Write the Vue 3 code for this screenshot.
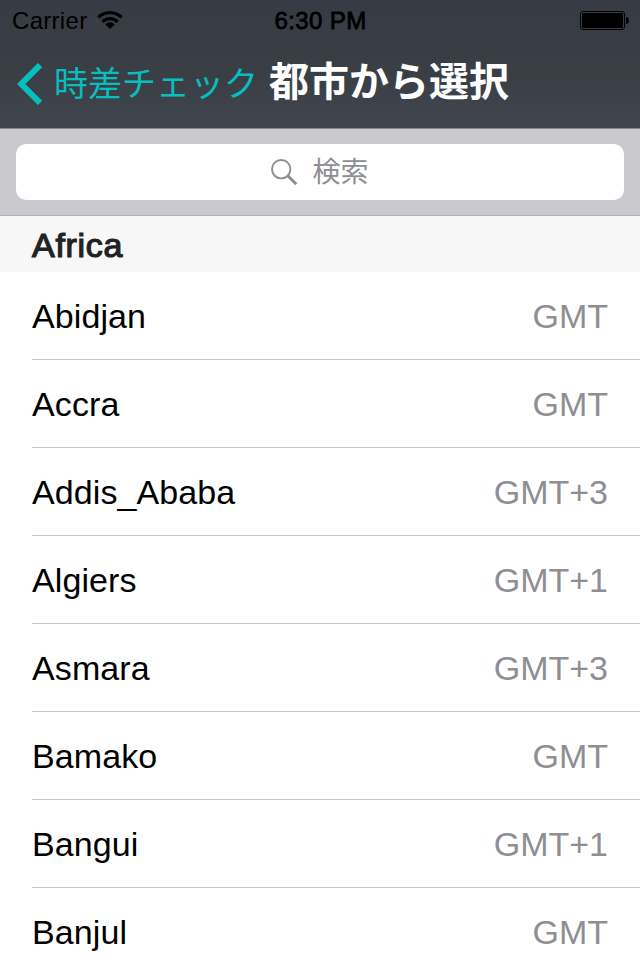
<script setup>
// 都市一覧（名前と GMT からの時差）
const cities = [
  { name: 'Abidjan', offset: 'GMT' },
  { name: 'Accra', offset: 'GMT' },
  { name: 'Addis_Ababa', offset: 'GMT+3' },
  { name: 'Algiers', offset: 'GMT+1' },
  { name: 'Asmara', offset: 'GMT+3' },
  { name: 'Bamako', offset: 'GMT' },
  { name: 'Bangui', offset: 'GMT+1' },
  { name: 'Banjul', offset: 'GMT' }
]
</script>

<template>
  <div class="screen">
    <header class="top">
      <!-- ステータスバー -->
      <div class="status">
        <div class="carrier">
          <span>Carrier</span>
          <svg class="wifi" width="26" height="18" viewBox="0 0 26 18">
            <g fill="none" stroke="#000" stroke-width="3.2">
              <path d="M1.4 6.4A16.4 16.4 0 0 1 24.6 6.400" />
              <path d="M5.4 10.9A10.6 10.6 0 0 1 20.6 10.9" />
            </g>
            <path d="M13 18L8.300 13.4A6.4 6.4 0 0 1 17.700 13.4Z" />
          </svg>
        </div>
        <span class="time">6:30 PM</span>
        <svg class="battery" width="49" height="20" viewBox="0 0 49 20">
          <rect x="0.5" y="0.5" width="44" height="18" rx="2.5" fill="none" stroke="#000" />
          <rect x="2" y="2" width="41" height="15" rx="1" />
          <path d="M46 6C48 6 49 7.500 49 9.500S48 13 46 13Z" />
        </svg>
      </div>
      <!-- ナビゲーションバー -->
      <nav class="nav">
        <div class="back">
          <svg class="chevron" width="26" height="42" viewBox="0 0 26 42">
            <path d="M23.100 2.100L4.200 21L23.100 39.900" fill="none" stroke="#06bfbf" stroke-width="6" />
          </svg>
          <span class="back-label">時差チェック</span>
        </div>
        <h1 class="title">都市から選択</h1>
      </nav>
    </header>

    <div class="search">
      <div class="search-box">
        <svg class="glass" width="27" height="27" viewBox="0 0 27 27">
          <g fill="none" stroke="#8e8e93">
            <circle cx="10.200" cy="10.200" r="9.200" stroke-width="1.900" />
            <path d="M16.800 16.800L25.300 25.300" stroke-width="3" />
          </g>
        </svg>
        <span class="placeholder">検索</span>
      </div>
    </div>

    <h2 class="section">Africa</h2>
    <ul class="list">
      <li v-for="city in cities" :key="city.name" class="row">
        <span class="name">{{ city.name }}</span>
        <span class="offset">{{ city.offset }}</span>
      </li>
    </ul>
  </div>
</template>

<style>
body { margin: 0; background: #fff; }
</style>

<style scoped>
.screen {
  width: 640px; height: 960px; overflow: hidden; background: #fff; color: #000;
  font-family: "Liberation Sans", "Noto Sans CJK JP", sans-serif;
}
/* 上部バー */
.top { height: 128px; background: linear-gradient(#373b43, #3a3f46 60%, #41454e); }
.status {
  display: grid; grid-template-columns: 1fr auto 1fr; height: 40px;
  padding: 0 11px 0 12px; box-sizing: border-box; font-size: 24px; line-height: 42px;
}
.carrier { display: flex; letter-spacing: 0.3px; }
.wifi { margin: 11px 0 0 10px; }
/* 中間の太さは細い縁取りで出す */
.time { letter-spacing: 0.4px; -webkit-text-stroke: 0.8px #000; }
.battery { justify-self: end; margin-top: 11px; }
.nav { display: flex; height: 88px; }
.back { display: flex; color: #06bfbf; }
.chevron { margin: 23px 0 0 17px; }
.back-label {
  margin-left: 11px; width: 205px; white-space: nowrap;
  font-family: "Noto Sans CJK JP", sans-serif; font-weight: 400; font-size: 34px; line-height: 84px;
}
.title {
  margin: 0 0 0 10px; white-space: nowrap; color: #fff;
  font-family: "Noto Sans CJK JP", sans-serif; font-weight: 700; font-size: 40px; line-height: 79px;
}
/* 検索バー */
.search {
  height: 88px; box-sizing: border-box; padding: 15px 16px;
  background: #c9c9ce; border-top: 1px solid #85868b; border-bottom: 1px solid #b2b2b7;
}
.search-box {
  display: flex; justify-content: center; height: 56px;
  border-radius: 10px; background: #fff; color: #8e8e93;
}
.glass { margin: 15px 0 0 0; }
.placeholder {
  margin-left: 14px; font-family: "Noto Sans CJK JP", sans-serif;
  font-weight: 400; font-size: 28px; line-height: 52px;
}
/* セクション見出し */
.section {
  margin: 0; height: 56px; padding-left: 32px; background: #f7f7f7; color: #222;
  font-size: 34px; font-weight: 400; line-height: 59px; letter-spacing: 0.7px;
  -webkit-text-stroke: 1.2px #222;
}
.list { margin: 0; padding: 0; list-style: none; }
.row {
  display: flex; justify-content: space-between; height: 87px; margin-left: 32px;
  padding-right: 32px; border-bottom: 1px solid #c8c7cc; font-size: 34px; line-height: 89px;
}
.name { letter-spacing: 0.1px; }
.offset { color: #8e8e93; }
</style>
